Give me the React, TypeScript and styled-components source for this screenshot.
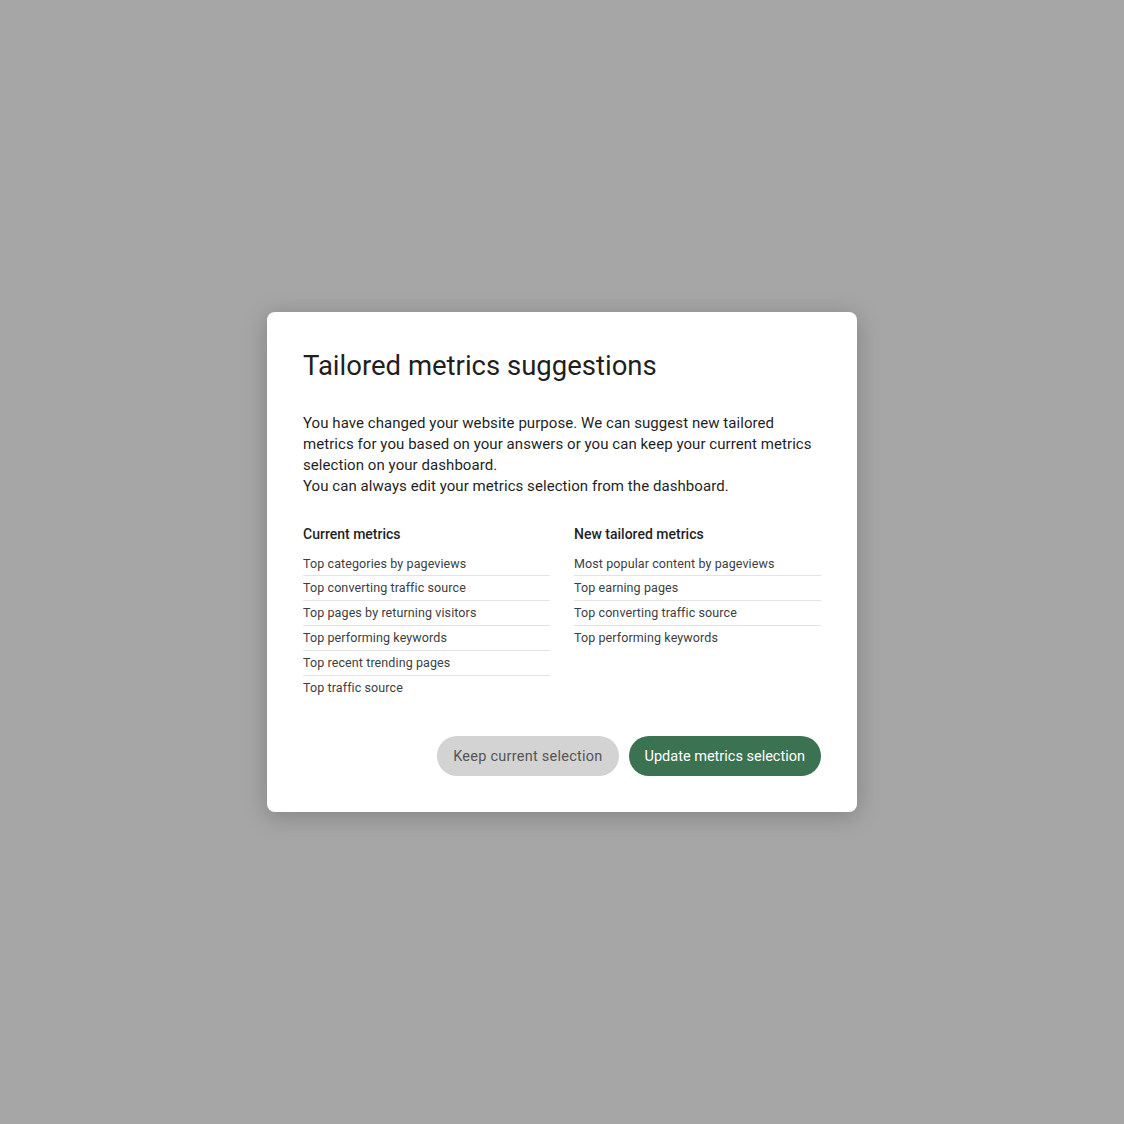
import styled, { createGlobalStyle } from "styled-components";

const GlobalStyle = createGlobalStyle`
  html, body {
    margin: 0;
    padding: 0;
    background: #a6a6a6;
  }
  body {
    font-family: Roboto, "Liberation Sans", sans-serif;
  }
`;

const Backdrop = styled.div`
  width: 100vw;
  height: 100vh;
  display: flex;
  align-items: center;
  justify-content: center;
  background: #a6a6a6;
`;

const Dialog = styled.div`
  width: 518px;
  padding: 36px;
  background: #ffffff;
  border-radius: 8px;
  box-shadow: 0 4px 24px rgba(0, 0, 0, 0.22);
  display: flex;
  flex-direction: column;
`;

const Title = styled.h1`
  margin: 0;
  font-size: 27.5px;
  line-height: 36px;
  font-weight: 400;
  color: #1f1f1f;
`;

const Body = styled.p`
  margin: 29px 0 0;
  font-size: 15px;
  line-height: 21px;
  letter-spacing: 0.06px;
  color: #1f1f1f;
`;

const Columns = styled.div`
  display: grid;
  grid-template-columns: 1fr 1fr;
  column-gap: 24px;
  margin-top: 27px;
`;

const Column = styled.div`
  display: flex;
  flex-direction: column;
`;

const ColumnTitle = styled.h3`
  margin: 0 0 8px;
  font-size: 14px;
  line-height: 20px;
  font-weight: 500;
  color: #1f1f1f;
`;

const MetricRow = styled.div`
  font-size: 12.5px;
  line-height: 23.8px;
  letter-spacing: 0.1px;
  color: #3c4043;
  border-bottom: 1px solid #e3e3e3;

  &:last-child {
    border-bottom: none;
  }
`;

const Actions = styled.div`
  display: flex;
  justify-content: flex-end;
  gap: 10px;
  margin-top: 37px;
`;

const Button = styled.button<{ $primary?: boolean }>`
  height: 40px;
  padding: 0 16px;
  border: none;
  border-radius: 20px;
  font-family: Roboto, "Liberation Sans", sans-serif;
  font-size: 14.5px;
  letter-spacing: ${(p) => (p.$primary ? "0" : "0.25px")};
  cursor: pointer;
  background: ${(p) => (p.$primary ? "#3b7251" : "#d3d3d3")};
  color: ${(p) => (p.$primary ? "#ffffff" : "#555555")};
`;

const currentMetrics = [
  "Top categories by pageviews",
  "Top converting traffic source",
  "Top pages by returning visitors",
  "Top performing keywords",
  "Top recent trending pages",
  "Top traffic source",
];

const newMetrics = [
  "Most popular content by pageviews",
  "Top earning pages",
  "Top converting traffic source",
  "Top performing keywords",
];

export default function App() {
  return (
    <>
      <GlobalStyle />
      <Backdrop>
        <Dialog>
          <Title>Tailored metrics suggestions</Title>
          <Body>
            You have changed your website purpose. We can suggest new tailored
            metrics for you based on your answers or you can keep your current
            metrics selection on your dashboard.
            <br />
            You can always edit your metrics selection from the dashboard.
          </Body>
          <Columns>
            <Column>
              <ColumnTitle>Current metrics</ColumnTitle>
              {currentMetrics.map((m) => (
                <MetricRow key={m}>{m}</MetricRow>
              ))}
            </Column>
            <Column>
              <ColumnTitle>New tailored metrics</ColumnTitle>
              {newMetrics.map((m) => (
                <MetricRow key={m}>{m}</MetricRow>
              ))}
            </Column>
          </Columns>
          <Actions>
            <Button>Keep current selection</Button>
            <Button $primary>Update metrics selection</Button>
          </Actions>
        </Dialog>
      </Backdrop>
    </>
  );
}
